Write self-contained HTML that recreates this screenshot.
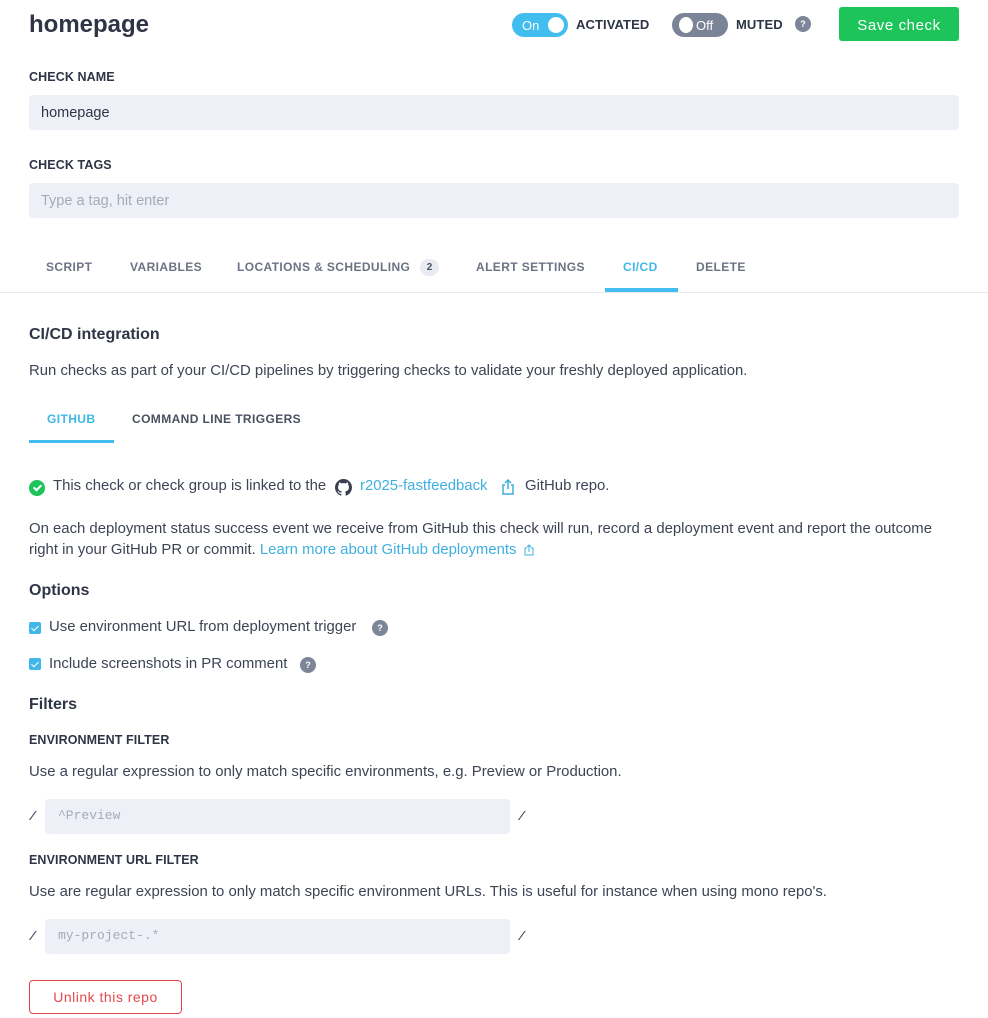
<!DOCTYPE html>
<html><head><meta charset="utf-8"><style>
*{margin:0;padding:0;box-sizing:border-box}
body{width:988px;height:1018px;background:#fff;font-family:"Liberation Sans",sans-serif;color:#3a4050;position:relative;overflow:hidden}
.a{position:absolute;white-space:nowrap}
.lbl{font-size:12.5px;font-weight:bold;color:#2f3546;letter-spacing:0.1px}
.inp{position:absolute;background:#edf0f7;border-radius:4px;font-size:14.5px}
.p{font-size:14.9px;color:#3d4454}
.tab{font-size:12px;font-weight:bold;color:#6b7384;letter-spacing:0.4px}
.h{font-size:16px;font-weight:bold;color:#2f3546}
.q{position:absolute;width:16px;height:16px;border-radius:50%;background:#7d8599;color:#fff;font-size:9px;font-weight:bold;text-align:center;line-height:16px}
.cb{position:absolute;width:12px;height:12px;border-radius:2px;background:#3fb8e8}
.cb:after{content:"";position:absolute;left:4px;top:1.5px;width:3px;height:6px;border:solid #fff;border-width:0 1.5px 1.5px 0;transform:rotate(45deg)}
.mono{font-family:"Liberation Mono",monospace;font-size:13px;color:#a4abb8}
.sl{font-family:"Liberation Mono",monospace;font-size:12px;font-weight:bold;color:#4a5060;font-style:italic}
</style></head><body>
<div class="a" style="left:29px;top:11px;font-size:24px;font-weight:bold;color:#2f3546">homepage</div>

<div class="a" style="left:512px;top:13px;width:56px;height:24px;border-radius:12px;background:#41bdf0"><span class="a" style="left:10px;top:5px;color:#fff;font-size:13px">On</span><span class="a" style="left:36px;top:4px;width:16px;height:16px;border-radius:50%;background:#fff"></span></div>
<div class="a lbl" style="left:576px;top:17px;font-size:13px">ACTIVATED</div>
<div class="a" style="left:672px;top:13px;width:56px;height:24px;border-radius:12px;background:#7b8397"><span class="a" style="left:7px;top:4px;width:14px;height:16px;border-radius:50%;background:#fff"></span><span class="a" style="left:24px;top:5px;color:#fff;font-size:13px">Off</span></div>
<div class="a lbl" style="left:736px;top:17px;font-size:13px">MUTED</div>
<div class="q" style="left:795px;top:16px">?</div>
<div class="a" style="left:839px;top:7px;width:120px;height:34px;border-radius:3px;background:#1cc45a;color:#fff;font-size:15px;display:flex;align-items:center;justify-content:center;padding-top:2px;letter-spacing:0.6px">Save check</div>

<div class="a lbl" style="left:29px;top:70px">CHECK NAME</div>
<div class="inp" style="left:29px;top:95px;width:930px;height:35px;padding:10px 12px;color:#2f3546">homepage</div>
<div class="a lbl" style="left:29px;top:158px">CHECK TAGS</div>
<div class="inp" style="left:29px;top:183px;width:930px;height:35px;padding:10px 12px;color:#a4abb8">Type a tag, hit enter</div>

<div class="a tab" style="left:46px;top:260px">SCRIPT</div>
<div class="a tab" style="left:130px;top:260px">VARIABLES</div>
<div class="a tab" style="left:237px;top:260px">LOCATIONS &amp; SCHEDULING</div>
<div class="a" style="left:420px;top:259px;width:19px;height:17px;border-radius:9px;background:#e8ebf2;font-size:10px;font-weight:bold;color:#4a5060;text-align:center;line-height:18px">2</div>
<div class="a tab" style="left:476px;top:260px">ALERT SETTINGS</div>
<div class="a tab" style="left:623px;top:260px;color:#3fb8e8">CI/CD</div>
<div class="a tab" style="left:696px;top:260px">DELETE</div>
<div class="a" style="left:0;top:292px;width:988px;height:1px;background:#e8ebf1"></div>
<div class="a" style="left:605px;top:288px;width:73px;height:4px;background:#41bdf0"></div>

<div class="a h" style="left:29px;top:326px">CI/CD integration</div>
<div class="a p" style="left:29px;top:363px">Run checks as part of your CI/CD pipelines by triggering checks to validate your freshly deployed application.</div>
<div class="a tab" style="left:47px;top:412px;color:#3fb8e8">GITHUB</div>
<div class="a tab" style="left:132px;top:412px;color:#4a5060">COMMAND LINE TRIGGERS</div>
<div class="a" style="left:29px;top:440px;width:85px;height:3px;background:#41bdf0"></div>

<div class="a" style="left:29px;top:480px;width:16px;height:16px;border-radius:50%;background:#1cc45a"></div>
<div class="a" style="left:34.5px;top:483px;width:5px;height:8px;border:solid #fff;border-width:0 2px 2px 0;transform:rotate(45deg)"></div>
<div class="a p" style="left:53px;top:478px">This check or check group is linked to the</div>
<svg class="a" style="left:335px;top:479px" width="17" height="17" viewBox="0 0 16 16"><path fill="#3a4050" d="M8 0C3.580 0 0 3.58 0 8c0 3.54 2.29 6.53 5.47 7.59.4.07.55-.17.55-.38v-1.33c-2.23.48-2.7-1.070-2.7-1.07-.36-.92-.89-1.170-.89-1.17-.73-.5.05-.49.05-.49.8.06 1.23.83 1.23.83.71 1.22 1.87.87 2.33.66.07-.52.28-.87.51-1.07-1.78-.2-3.64-.89-3.64-3.95 0-.87.31-1.59.83-2.15-.08-.2-.36-1.02.08-2.12 0 0 .67-.21 2.2.82a7.6 7.6 0 0 1 4 0c1.53-1.04 2.2-.82 2.2-.82.44 1.1.16 1.92.08 2.12.51.56.82 1.27.82 2.15 0 3.07-1.87 3.75-3.65 3.950.29.25.54.73.54 1.48v2.2c0 .21.15.46.55.38A8 8 0 0 0 16 8c0-4.42-3.58-8-8-8z"/></svg>
<div class="a p" style="left:360px;top:478px;color:#3fb0e0">r2025-fastfeedback</div>
<svg class="a" style="left:501px;top:479px" width="14" height="16" viewBox="0 0 14 16"><path d="M4 6H2v9h10V6h-2M7 10V1M4 4l3-3 3 3" fill="none" stroke="#3fb0e0" stroke-width="1.5"/></svg>
<div class="a p" style="left:525px;top:478px">GitHub repo.</div>

<div class="a p" style="left:29px;top:521px">On each deployment status success event we receive from GitHub this check will run, record a deployment event and report the outcome</div>
<div class="a p" style="left:29px;top:542px">right in your GitHub PR or commit. <span style="color:#3fb0e0">Learn more about GitHub deployments</span></div>
<svg class="a" style="left:524px;top:544px" width="10" height="12" viewBox="0 0 10 12"><path d="M3 4H1v7h8V4H7M5 8V1M3 3l2-2 2 2" fill="none" stroke="#3fb0e0" stroke-width="1"/></svg>

<div class="a h" style="left:29px;top:582px">Options</div>
<div class="cb" style="left:29px;top:622px"></div>
<div class="a p" style="left:49px;top:619px">Use environment URL from deployment trigger</div>
<div class="q" style="left:372px;top:620px">?</div>
<div class="cb" style="left:29px;top:658px"></div>
<div class="a p" style="left:49px;top:656px">Include screenshots in PR comment</div>
<div class="q" style="left:300px;top:657px">?</div>

<div class="a h" style="left:29px;top:696px">Filters</div>
<div class="a lbl" style="left:29px;top:733px">ENVIRONMENT FILTER</div>
<div class="a p" style="left:29px;top:764px">Use a regular expression to only match specific environments, e.g. Preview or Production.</div>
<div class="a sl" style="left:29px;top:810px">/</div>
<div class="inp mono" style="left:45px;top:799px;width:465px;height:35px;padding:9px 13px">^Preview</div>
<div class="a sl" style="left:518px;top:810px">/</div>

<div class="a lbl" style="left:29px;top:853px">ENVIRONMENT URL FILTER</div>
<div class="a p" style="left:29px;top:884px">Use are regular expression to only match specific environment URLs. This is useful for instance when using mono repo's.</div>
<div class="a sl" style="left:29px;top:930px">/</div>
<div class="inp mono" style="left:45px;top:919px;width:465px;height:35px;padding:9px 13px">my-project-.*</div>
<div class="a sl" style="left:518px;top:930px">/</div>

<div class="a" style="left:29px;top:980px;width:153px;height:34px;border:1px solid #e5484d;border-radius:4px;color:#e5484d;font-size:14px;text-align:center;line-height:32px;letter-spacing:0.5px">Unlink this repo</div>
</body></html>
